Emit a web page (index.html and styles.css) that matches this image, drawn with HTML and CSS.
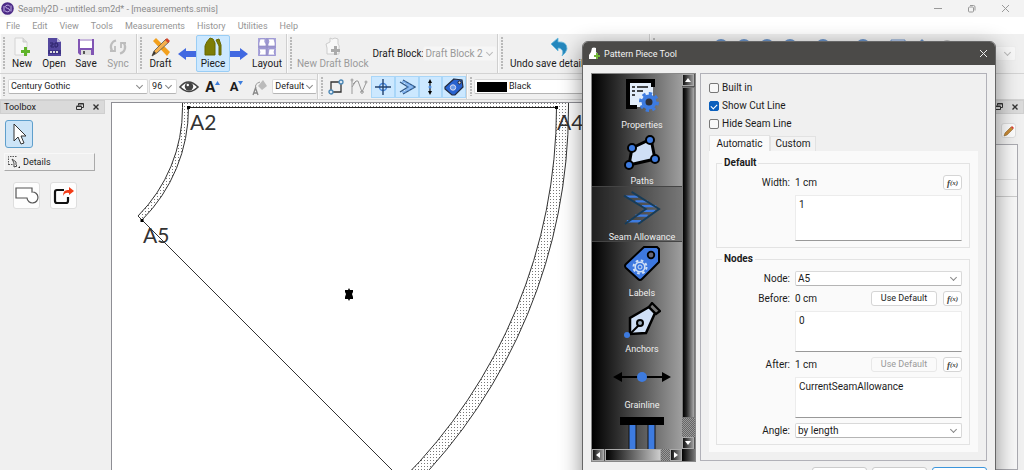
FILE: index.html
```html
<!DOCTYPE html>
<html lang="en">
<head>
<meta charset="utf-8">
<title>Seamly2D</title>
<link rel="stylesheet" href="styles.css">
</head>
<body>
<header class="titlebar">
  <svg class="app-logo" width="13" height="13" viewBox="0 0 13 13"><circle cx="6.500" cy="6.500" r="6.300" fill="#4b2a86"/><path d="M8.800 4.200C8 2.700 4.400 2.800 4.400 4.600c0 2 4.400 1.500 4.400 3.700 0 2-4 2-4.800.4M10 3.500v6M3 4v5.500" fill="none" stroke="#c3b1e6" stroke-width="1"/></svg>
  <h1 class="title-text">Seamly2D - untitled.sm2d* - [measurements.smis]</h1>
  <div class="win-buttons">
    <button class="plain" aria-label="Minimize"><svg width="9" height="9" viewBox="0 0 9 9"><path d="M1 4.500h8" stroke="#999"/></svg></button>
    <button class="plain" aria-label="Restore"><svg width="9" height="9" viewBox="0 0 9 9" fill="none" stroke="#999"><rect x="1.500" y="3" width="5" height="5" rx="1"/><path d="M3 1.500h3.500q1.500 0 1.500 1.500v3.500"/></svg></button>
    <button class="plain" aria-label="Close"><svg width="9" height="9" viewBox="0 0 9 9"><path d="M1 1l7 7M8 1l-7 7" stroke="#999"/></svg></button>
  </div>
</header>
<nav class="menubar">
  <button class="plain">File</button><button class="plain">Edit</button><button class="plain">View</button><button class="plain">Tools</button><button class="plain">Measurements</button><button class="plain">History</button><button class="plain">Utilities</button><button class="plain">Help</button>
</nav>

<div class="toolbar main-tools">
  <div class="tool-group files">
    <i class="handle"></i>
    <button class="tool"><svg width="20" height="20" viewBox="0 0 20 20"><path d="M3 1h8l4 4v13H3z" fill="#f7f7f7" stroke="#d4d4d4"/><path d="M11 1v4h4" fill="#ddd" stroke="#ccc"/><path d="M12 10h3v3h3v3h-3v3h-3v-3H9v-3h3z" fill="#5fb32a"/></svg><span>New</span></button>
    <button class="tool"><svg width="20" height="20" viewBox="0 0 20 20"><path d="M4 1h9l4 4v14H4z" fill="#54479e"/><path d="M13 1v4h4z" fill="#b9b3dc"/><path d="M6 6h3v2H7v2h3M11 6h2q2 2 0 4h-2z" fill="none" stroke="#2a2266"/><path d="M4 13h13v4H4z" fill="#3c3284"/><path d="M6 15h9" stroke="#ddd" stroke-width="2" stroke-dasharray="2 1"/></svg><span>Open</span></button>
    <button class="tool"><svg width="20" height="20" viewBox="0 0 20 20"><path d="M2 2h16v16H4l-2-2z" fill="#8155b4"/><path d="M4 2h12v9H4z" fill="#fff"/><path d="M4 2h12v2H4z" fill="#c9b8de"/><path d="M5 13h10v5H5z" fill="#ddd"/><path d="M7 14h2v3H7z" fill="#555"/></svg><span>Save</span></button>
    <button class="tool" disabled><svg width="20" height="20" viewBox="0 0 20 20" fill="none" stroke="#bdbdbd" stroke-width="2.200"><path d="M8 3.500a6.500 6.500 0 0 0-4 10M12 16.500a6.500 6.500 0 0 0 4-10"/><path d="M2 14h5V9M18 6h-5v5" stroke-width="1.800"/></svg><span>Sync</span></button>
  </div>
  <div class="tool-group modes">
    <i class="handle"></i>
    <button class="tool"><svg width="20" height="20" viewBox="0 0 20 20"><path d="M2 4l3-3 14 14-3 4z" fill="#f2a01d"/><path d="M15 2l3 3L6 16l-5 3 2-5z" fill="#f5b04d" stroke="#555" stroke-width=".8"/><path d="M14 3l2-2 3 3-2 2z" fill="#d4472b"/><path d="M3 14l2 2-4 3z" fill="#333"/></svg><span>Draft</span></button>
    <svg class="arrow" width="18" height="14" viewBox="0 0 18 14"><path d="M0 7l8-6v3h10v6H8v3z" fill="#4169e1"/></svg>
    <button class="tool active"><svg width="20" height="20" viewBox="0 0 20 20"><path d="M2 18V9q1-4 5-8l3 1 2 4v12zM13 3l3-1 2 6v10h-2V9z" fill="#7d7d05" stroke="#666600"/></svg><span>Piece</span></button>
    <svg class="arrow" width="18" height="14" viewBox="0 0 18 14"><path d="M18 7l-8-6v3H0v6h10v3z" fill="#4169e1"/></svg>
    <button class="tool"><svg width="20" height="20" viewBox="0 0 20 20"><path d="M1 1h18v18H1z" fill="#aaa5dc"/><path d="M3 2h5q-1 3 1 5v2H2V6zM11 2h6l1 4v3h-7V7q2-2 0-5zM2 12h7v6H2q2-3 0-6zM12 12h6q-2 3 0 6h-7z" fill="#fff" stroke="#8781c4" stroke-width=".6"/><path d="M1 10h18M10 1v18" stroke="#8f89c0"/></svg><span>Layout</span></button>
  </div>
  <div class="tool-group draft">
    <i class="handle"></i>
    <button class="tool" disabled><svg width="20" height="20" viewBox="0 0 20 20"><path d="M7 1q2 2 5 0l3 1v5q2 2 1 4v6H4v-6l-1-4 4-2z" fill="#f8f8f8" stroke="#ccc"/><path d="M11 9h3v3h3v3h-3v3h-3v-3H8v-3h3z" fill="#aaa"/></svg><span>New Draft Block</span></button>
    <label for="block">Draft Block:</label>
    <span class="pick block-pick"><select id="block" disabled><option>Draft Block 2</option></select></span>
  </div>
  <div class="tool-group history">
    <i class="handle"></i>
    <button class="tool undo"><svg width="20" height="20" viewBox="0 0 20 20"><path d="M2 7l7-6v4q9-1 9 7-1 4-5 7 2-5-1-7-1-1-3-1v3z" fill="#2487bd" stroke="#64b7dc" stroke-width=".8"/></svg><span>Undo save detail</span></button>
  </div>
  <div class="tool-group zooms">
    <i class="handle"></i>
    <svg class="zoom-icons" width="260" height="16" viewBox="0 0 260 16"><g fill="#d8e4f2" stroke="#6a93c8" stroke-width="2"><circle cx="21" cy="8" r="6"/><circle cx="44" cy="8" r="6"/><circle cx="67" cy="8" r="6"/><circle cx="90" cy="8" r="6"/><circle cx="123" cy="8" r="6"/><circle cx="163" cy="8" r="6"/></g><path d="M191 2h14v12h-14z" fill="#eef" stroke="#6a93c8"/><path d="M222 1l6 6h-12z" fill="#6a93c8"/><circle cx="247" cy="8" r="6" fill="#bbb"/></svg>
    <span class="pick zoom-pick"><select aria-label="Zoom" disabled><option></option></select></span>
  </div>
</div>

<div class="toolbar format-tools">
  <div class="tool-group fonts">
    <i class="handle"></i>
    <span class="pick font-pick"><select aria-label="Font"><option>Century Gothic</option></select></span>
    <span class="pick size-pick"><select aria-label="Font size"><option>96</option></select></span>
    <button class="mini" aria-label="Show point names"><svg width="20" height="16" viewBox="0 0 20 16"><path d="M1 8q8-10 18 0-9 9-18 0z" fill="#fff" stroke="#444" stroke-width="1.600"/><circle cx="10" cy="7.500" r="4.200" fill="#444"/><circle cx="8.800" cy="6" r="1.200" fill="#fff"/></svg></button>
    <button class="mini letter" aria-label="Larger"><b>A</b><svg width="5" height="4" viewBox="0 0 5 4"><path d="M0 4l2.500-4L5 4z" fill="#3c7ddd"/></svg></button>
    <button class="mini letter small" aria-label="Smaller"><b>A</b><svg width="5" height="4" viewBox="0 0 5 4"><path d="M0 0l2.500 4L5 0z" fill="#3c7ddd"/></svg></button>
    <button class="mini" aria-label="Text color" disabled><svg width="18" height="18" viewBox="0 0 18 18"><path d="M2 17l2.500-7L7 17M3 15h3" fill="none" stroke="#888" stroke-width="1.300"/><path d="M7 8l5-6 4 6-5 4z" fill="#bbb"/><path d="M5 10q-2-4 4-6" stroke="#999" fill="none"/></svg></button>
    <span class="pick style-pick"><select aria-label="Text style"><option>Default</option></select></span>
  </div>
  <div class="tool-group shows">
    <i class="handle"></i>
    <button class="mini" aria-label="Show nodes"><svg width="18" height="18" viewBox="0 0 18 18" fill="#dce9f4" stroke="#333" stroke-width="1.300"><path d="M4 4h10v10H4z" fill="none"/><circle cx="14" cy="4" r="2" stroke="#4b87b5"/><circle cx="4" cy="14" r="2" stroke="#4b87b5"/></svg></button>
    <button class="mini" aria-label="Show curves" disabled><svg width="18" height="18" viewBox="0 0 18 18" fill="none" stroke="#999"><path d="M2 16V3M2 9l4-6h2l4 11 4-9M6 3L3 6"/><circle cx="2" cy="2" r="1"/><circle cx="12" cy="14" r="1.300"/><circle cx="16" cy="4" r="1"/></svg></button>
    <button class="mini on" aria-label="Show origin"><svg width="18" height="18" viewBox="0 0 18 18" fill="none"><circle cx="9" cy="9" r="3.500" stroke="#4b8be0" stroke-width="1.600"/><path d="M9 1v16M1 9h16" stroke="#23426e" stroke-width="1.400"/></svg></button>
    <button class="mini on" aria-label="Show seam allowance"><svg width="18" height="18" viewBox="0 0 18 18" fill="none" stroke="#2f5684" stroke-width="1.300"><path d="M5 2l12 7-12 7M2 4l8 5-8 5"/><path d="M4 4h4M7 6h5M9 8h6M9 10h6M7 12h5M4 14h4" stroke="#4b8be0" stroke-width="1"/></svg></button>
    <button class="mini on" aria-label="Show grainline"><svg width="18" height="18" viewBox="0 0 18 18"><path d="M9 3v12" stroke="#111" stroke-width="1.200"/><path d="M9 1l2 4H7zM9 17l2-4H7z"/><circle cx="9" cy="9" r="1.500" fill="#4b8be0"/></svg></button>
    <button class="mini on" aria-label="Show labels"><svg width="20" height="18" viewBox="0 0 20 18"><path d="M10 1l8 1 1 7-8 8-3 0-7-6 0-2z" fill="#2862cf" stroke="#222a3c" stroke-width="1.200"/><circle cx="15.500" cy="4.500" r="1.500" fill="#dde" stroke="#222"/><circle cx="9" cy="9.500" r="2.700" fill="#6b9be8" stroke="#dde"/></svg></button>
  </div>
  <div class="tool-group pens">
    <i class="handle"></i>
    <span class="pick pen-pick"><i class="swatch"></i><select aria-label="Line color"><option>Black</option></select></span>
  </div>
</div>

<main class="workspace">
  <aside class="toolbox">
    <div class="dock-title"><h2>Toolbox</h2>
      <button class="plain" aria-label="Float"><svg width="8" height="8" viewBox="0 0 8 8" fill="none" stroke="#333"><path d="M2.500 2.500v-2h5v4h-2M.5 3.500h5v3h-5zM.5 3h5M2.500 1h5"/></svg></button>
      <button class="plain" aria-label="Close toolbox"><svg width="8" height="8" viewBox="0 0 8 8"><path d="M1.500 1.500l5 5M6.500 1.500l-5 5" stroke="#333" stroke-width="1.400"/></svg></button>
    </div>
    <button class="pointer" aria-label="Select"><svg width="16" height="24" viewBox="0 0 16 24"><path d="M3 2v17l4-4 3 7 3-1-3-7h5z" fill="#fff" stroke="#333"/></svg></button>
    <button class="details"><svg width="14" height="14" viewBox="0 0 14 14"><path d="M1.500 10V1.500h8" fill="none" stroke="#555" stroke-dasharray="1.500 1"/><path d="M1.500 9.500h4" fill="none" stroke="#555" stroke-dasharray="1.500 1"/><path d="M5 4l4 3v3l1 1-3 1V8z" fill="#fff" stroke="#444"/><path d="M11 13h2v-2z" fill="#222"/></svg>Details</button>
    <div class="piece-tools">
      <button aria-label="Union"><svg width="24" height="20" viewBox="0 0 24 20"><path d="M1 2h16v4a5.500 5.500 0 1 1-5 6H1z" fill="#fff" stroke="#555" stroke-width="1.200"/></svg></button>
      <button aria-label="Export piece"><svg width="22" height="20" viewBox="0 0 22 20"><path d="M11 4H4q-2 0-2 2v9q0 2 2 2h9q2 0 2-2v-4" fill="none" stroke="#111" stroke-width="2.200"/><path d="M10 10q0-7 6-6V1l5 4-5 4V7q-4-1-6 3z" fill="#f33b16"/></svg></button>
    </div>
  </aside>
  <section class="canvas">
    <svg class="drawing" width="470" height="367" viewBox="112 103 470 367">
      <defs><pattern id="dots" width="3" height="3" patternUnits="userSpaceOnUse"><path d="M1 1h1v1H1z" fill="#777"/></pattern></defs>
      <path d="M182.500 103H568.500V107.700A539 539 0 0 1 411 489L402 480A527 527 0 0 0 556.500 107.700H188.500A159 159 0 0 1 142 220L138 216A153 153 0 0 0 182.500 107.700z" fill="url(#dots)"/>
      <g fill="none" stroke="#333" stroke-width="1">
        <path d="M568.500 103v5A539 539 0 0 1 411 489"/>
        <path d="M556.500 107.500A527 527 0 0 1 402 480L142 220A159 159 0 0 0 188.500 107.500"/>
        <path d="M142 220l-4-4A153 153 0 0 0 182.500 107.500v-5"/>
      </g>
      <path d="M188 107.500H557" stroke="#222"/>
      <path d="M187 106h3v3h-3zM555 106h3v3h-3zM140.500 219h3v3h-3z"/>
      <path d="M345 290h3l1-2 1 2h3v2l-1 2 1 3v2h-3l-1 2-1-2h-3v-2l1-3-1-2z"/>
      <g class="node-names"><text x="190" y="130">A2</text><text x="143" y="243">A5</text><text x="557" y="130">A4</text></g>
    </svg>
  </section>
  <aside class="right-dock">
    <div class="dock-title">
      <button class="plain" aria-label="Float"><svg width="8" height="8" viewBox="0 0 8 8" fill="none" stroke="#333"><path d="M2.500 2.500v-2h5v4h-2M.5 3.500h5v3h-5zM.5 3h5M2.500 1h5"/></svg></button>
      <button class="plain" aria-label="Close panel"><svg width="8" height="8" viewBox="0 0 8 8"><path d="M1.500 1.500l5 5M6.500 1.500l-5 5" stroke="#333" stroke-width="1.400"/></svg></button>
    </div>
    <button class="edit" aria-label="Edit"><svg width="12" height="12" viewBox="0 0 12 12"><path d="M1 11l1-3 6-6 2 2-6 6z" fill="#c98b35" stroke="#80571c" stroke-width=".5"/><path d="M8 2l1-1 2 2-1 1z" fill="#e03c31"/></svg></button>
    <div class="pieces"><div class="head"></div><div class="row"></div></div>
  </aside>
</main>

<section class="dialog" role="dialog" aria-labelledby="dlg">
  <header class="dialog-title">
    <svg width="13" height="13" viewBox="0 0 13 13"><path d="M4 1q2-1 4 0v4l2 2v5H1V8l2-3z" fill="#fff"/><path d="M8 6h2v2h2v2h-2v2H8v-2H6V8h2z" fill="#71b539"/></svg>
    <h2 id="dlg">Pattern Piece Tool</h2>
    <button class="plain" aria-label="Close dialog"><svg width="9" height="9" viewBox="0 0 9 9"><path d="M1 1l7 7M8 1l-7 7" stroke="#eee"/></svg></button>
  </header>
  <div class="dialog-body">
    <div class="pages">
      <div class="page-list">
        <button class="page"><svg width="36" height="36" viewBox="0 0 36 36"><path d="M3 3h26v26H3z" fill="#e3eefb"/><path d="M13 29H4V3h25v6" fill="none" stroke="#000" stroke-width="4"/><path d="M8 9h3M13 9h11M8 13h3M13 13h6M8 17h3" stroke="#111" stroke-width="1.600"/><circle cx="25" cy="24" r="8.500" fill="none" stroke="#3d7be0" stroke-width="3" stroke-dasharray="3.300 3.300"/><circle cx="25" cy="24" r="5.500" fill="#2d2d33" stroke="#3d7be0" stroke-width="4"/></svg><span>Properties</span></button>
        <button class="page"><svg width="38" height="36" viewBox="0 0 38 36"><path d="M9 14l19-9 4 20-26 6z" fill="#cfdff5" stroke="#000" stroke-width="3"/><g fill="#3d7be0" stroke="#000" stroke-width="2"><circle cx="9" cy="14" r="4"/><circle cx="27" cy="6" r="4"/><circle cx="32" cy="25" r="4"/><circle cx="6" cy="31" r="4"/></g></svg><span>Paths</span></button>
        <button class="page current"><svg width="40" height="38" viewBox="0 0 40 38"><path d="M3 7h13M13 12h13M20 17h15M21 22h13M13 27h13M4 33h15" stroke="#3d7be0" stroke-width="2.500"/><path d="M9 2l29 18-22 16M1 6l23 14L2 36" fill="none" stroke="#173c58" stroke-width="2"/></svg><span>Seam Allowance</span></button>
        <button class="page"><svg width="38" height="36" viewBox="0 0 38 36"><path d="M21 1h13l2 2v13L19 33q-2 2-4 0L3 22q-2-2 0-4z" fill="#3d78df" stroke="#000" stroke-width="2"/><circle cx="28" cy="9" r="3.300" fill="#667" stroke="#000" stroke-width="1.800"/><circle cx="17" cy="21" r="6.500" fill="none" stroke="#cfdff5" stroke-width="2" stroke-dasharray="2.600 2.500"/><circle cx="17" cy="21" r="4.800" fill="#3d78df" stroke="#cfdff5" stroke-width="1.600"/><circle cx="17" cy="21" r="2" fill="none" stroke="#cfdff5"/></svg><span>Labels</span></button>
        <button class="page"><svg width="38" height="36" viewBox="0 0 38 36"><path d="M7 32V16l19-11 6 6-9 20z" fill="#cfdff5" stroke="#000" stroke-width="2.500"/><path d="M26 5l3-4 8 8-4 3z" fill="#777" stroke="#000" stroke-width="2.200"/><path d="M7 32l9-9" stroke="#000" stroke-width="2"/><circle cx="17" cy="21" r="3" fill="#9ab" stroke="#000" stroke-width="2"/><circle cx="4" cy="33" r="3" fill="#3d7be0"/></svg><span>Anchors</span></button>
        <button class="page"><svg width="58" height="36" viewBox="0 0 58 36"><path d="M5 19h48" stroke="#000" stroke-width="2.200"/><path d="M0 19l9-5v10zM58 19l-9-5v10z"/><circle cx="29" cy="19" r="5" fill="#3d7be0"/></svg><span>Grainline</span></button>
        <button class="page" aria-label="Passmarks"><svg width="44" height="36" viewBox="0 0 44 36"><path d="M9 9h7v27H9zM28 9h7v27h-7z" fill="#3d7be0" stroke="#111"/><path d="M0 3h44v8H0z"/></svg></button>
      </div>
      <div class="vscroll"><button aria-label="Scroll up"><svg width="6" height="4" viewBox="0 0 6 4"><path d="M0 4l3-4 3 4z"/></svg></button><i class="thumb"></i><i class="track"></i><button aria-label="Scroll down"><svg width="6" height="4" viewBox="0 0 6 4"><path d="M0 0l3 4 3-4z"/></svg></button></div>
      <div class="hscroll"><button aria-label="Scroll left"><svg width="4" height="6" viewBox="0 0 4 6"><path d="M4 0L0 3l4 3z"/></svg></button><i class="thumb"></i><i class="track"></i><button aria-label="Scroll right"><svg width="4" height="6" viewBox="0 0 4 6"><path d="M0 0l4 3-4 3z"/></svg></button></div>
      <div class="corner"></div>
    </div>
    <form class="settings">
      <label class="check"><input type="checkbox">Built in</label>
      <label class="check"><input type="checkbox" checked>Show Cut Line</label>
      <label class="check"><input type="checkbox">Hide Seam Line</label>
      <div class="tabs"><button type="button" class="tab selected">Automatic</button><button type="button" class="tab">Custom</button></div>
      <div class="tab-page">
        <fieldset><legend>Default</legend>
          <label for="w">Width:</label><div class="value"><output>1 cm</output><button type="button" class="fx" aria-label="Edit width formula">f<small>(x)</small></button></div>
          <textarea id="w" class="tall">1</textarea>
        </fieldset>
        <fieldset><legend>Nodes</legend>
          <label for="n">Node:</label><span class="pick"><select id="n"><option>A5</option></select></span>
          <label for="b">Before:</label><div class="value"><output>0 cm</output><button type="button" class="use">Use Default</button><button type="button" class="fx" aria-label="Edit before formula">f<small>(x)</small></button></div>
          <textarea id="b">0</textarea>
          <label for="a">After:</label><div class="value"><output>1 cm</output><button type="button" class="use" disabled>Use Default</button><button type="button" class="fx" aria-label="Edit after formula">f<small>(x)</small></button></div>
          <textarea id="a">CurrentSeamAllowance</textarea>
          <label for="g">Angle:</label><span class="pick"><select id="g"><option>by length</option></select></span>
        </fieldset>
      </div>
    </form>
  </div>
  <footer class="dialog-actions"><button aria-label="Apply"></button><button aria-label="Cancel"></button><button class="primary" aria-label="OK"></button></footer>
</section>
</body>
</html>
```
FILE: styles.css
```css
* { box-sizing: border-box; }
html, body { height: 100%; }
body { margin: 0; display: flex; flex-direction: column; overflow: hidden; position: relative; background: #f0f0f0; color: #1b1b1b; font: 9px/14px Roboto, "Noto Sans", sans-serif; }
button, select, textarea, input { font: inherit; color: inherit; margin: 0; }
button { display: flex; align-items: center; justify-content: center; padding: 0; border: 0; background: none; white-space: nowrap; }
h1, h2 { margin: 0; font-size: inherit; font-weight: 400; }
svg { display: block; flex: none; }
i { display: block; }

.titlebar { flex: none; display: flex; align-items: center; gap: 4px; height: 17px; padding: 0 14px 0 1px; background: #f3f3f3; }
.title-text { flex: 1; color: #8a8a8a; }
.win-buttons { display: flex; gap: 25px; }
.menubar { flex: none; display: flex; gap: 12px; height: 17px; padding: 0 6px 0 6px; background: #fff; color: #959595; }

.toolbar { flex: none; display: flex; border-bottom: 1px solid #d3d3d3; }
.tool-group { flex: none; display: flex; align-items: center; border-right: 1px solid #cfcfcf; border-left: 1px solid #fafafa; }
.handle { flex: none; align-self: stretch; width: 3px; margin: 3px 0 3px 2px; background: radial-gradient(circle at 1px 1px, #b9b9b9 1px, transparent 1px) 0 0 / 3px 3px; }
.main-tools { height: 40px; }
.main-tools .tool { flex-direction: column; height: 37px; font-size: 10px; border: 1px solid transparent; border-radius: 2px; }
.main-tools .tool span { line-height: 14px; }
.main-tools .tool:disabled { color: #9b9b9b; }
.main-tools .tool.active { width: 34px; background: #cce8ff; border-color: #99cdf5; }
.files { width: 137px; }
.files .tool { width: 32px; }
.modes { width: 150px; }
.modes .tool { width: 35px; }
.modes .tool:last-child { width: 38px; }
.draft { width: 211px; font-size: 10px; }
.draft .tool { width: 80px; }
.draft label { width: 51px; white-space: nowrap; }
.history { width: 152px; }
.history .undo { width: 100px; margin-left: 5px; }
.history .undo span { align-self: flex-start; }
.zooms { flex: 1; border-right: 0; align-items: flex-start; padding-top: 4px; }
.zooms .handle { margin-top: 0; }
.zoom-icons { margin-left: 44px; }

.pick { position: relative; display: flex; align-items: center; height: 15px; border: 1px solid #d9d9d9; border-bottom-color: #b5b5b5; border-radius: 2px; background: #fff; }
.pick select { appearance: none; width: 100%; height: 13px; padding: 0 10px 0 2px; border: 0; background: none; line-height: 13px; opacity: 1; }
.pick::after { content: ""; position: absolute; right: 5px; top: 3px; width: 4px; height: 4px; border: solid #888; border-width: 0 1px 1px 0; transform: rotate(45deg); pointer-events: none; }
.block-pick { width: 74px; border-color: #f3f3f3; background: #f6f6f6; color: #999; }
.block-pick::after, .zoom-pick::after { border-color: #bbb; }
.block-pick select { padding-left: 1px; }
.block-pick::after, .style-pick::after { right: 4px; }
.zoom-pick { width: 40px; margin: 8px 8px 0 auto; border-color: #eee; background: #f8f8f8; }

.format-tools { height: 26px; }
.mini { width: 24px; height: 22px; }
.mini.on { background: #cce8ff; border: 1px solid #a9d6f8; }
.fonts { width: 318px; }
.font-pick { width: 141px; margin: 0 1px 0 2px; }
.size-pick { width: 28px; }
.letter { align-items: flex-start; font-size: 15px; line-height: 22px; }
.letter b { font-weight: 700; }
.letter svg { margin-top: 5px; }
.letter.small { font-size: 13px; }
.style-pick { width: 45px; }
.shows { width: 149px; }
.pens .pick { margin-left: 1px; }
.pen-pick { width: 150px; padding-left: 2px; }
.swatch { flex: none; width: 30px; height: 10px; background: #000; }

.workspace { flex: 1; min-height: 0; display: flex; gap: 6px; }
.toolbox { flex: none; width: 105px; display: flex; flex-direction: column; align-items: flex-start; }
.dock-title { align-self: stretch; display: flex; align-items: center; gap: 8px; height: 14px; padding: 0 4px 0 3px; background: #dadada; border: 1px solid #cfcfcf; }
.dock-title h2 { flex: 1; }
.pointer { width: 28px; height: 28px; margin: 6px 0 0 5px; background: #cce4f7; border: 1px solid #5f9fcc; border-radius: 3px; }
.details { justify-content: flex-start; gap: 2px; width: 91px; height: 18px; margin: 5px 0 0 4px; padding-left: 2px; border: 1px solid #f8f8f8; border-right-color: #aaa; border-bottom-color: #aaa; }
.piece-tools { display: flex; gap: 10px; margin: 11px 0 0 13px; }
.piece-tools button, .edit { width: 27px; height: 27px; background: #fdfdfd; border: 1px solid #dedede; border-radius: 3px; }
.canvas { flex: 1; min-width: 0; margin-top: 2px; overflow: hidden; background: #fff; border: solid #8e8e94; border-width: 1px 0 0 1px; }
.node-names { font: 400 21px Lato, sans-serif; fill: #333; }
.right-dock { flex: none; width: 34px; display: flex; flex-direction: column; align-items: flex-end; }
.right-dock .dock-title { justify-content: flex-end; }
.edit { width: 15px; height: 15px; margin: 9px 8px 6px 0; }
.pieces { align-self: stretch; flex: 1; margin-right: 6px; background: #f8f8f8; border: 1px solid #aaaab0; }
.pieces .head { height: 35px; border-bottom: 1px solid #ddd; }
.pieces .row { height: 17px; border-bottom: 1px solid #ccc; }

.dialog { position: absolute; left: 582px; top: 41px; width: 414px; background: #f0f0f0; border: 1px solid #666; border-radius: 6px 6px 0 0; box-shadow: 0 6px 22px rgba(0, 0, 0, .45); }
.dialog-title { display: flex; align-items: center; gap: 3px; height: 23px; padding: 0 7px 0 5px; background: #4b4a48; color: #f2f2f2; border-radius: 5px 5px 0 0; }
.dialog-title h2 { flex: 1; }
.dialog-body { display: flex; align-items: flex-start; gap: 4px; padding: 8px 8px 5px 8px; }
.pages { flex: none; display: grid; grid-template: 375px 12px / 90px 13px; width: 105px; border: 1px solid #888; }
.page-list { overflow: hidden; padding-left: 10px; background: linear-gradient(90deg, #000, #9f9f9f); color: #eee; }
.page { flex-direction: column; justify-content: flex-start; width: 100%; height: 56px; padding-top: 4px; }
.page svg { margin-bottom: 4px; height: 36px; }
.page span { line-height: 14px; }
.page.current { width: 90px; margin-left: -10px; padding-left: 10px; background: rgba(70, 70, 70, .45); border: solid #444; border-width: 1px 0; padding-top: 3px; }
.vscroll { display: flex; flex-direction: column; background: #555; }
.vscroll button, .hscroll button { flex: none; width: 12px; height: 12px; background: linear-gradient(90deg, #111, #999); border: 1px solid #aaa; }
.vscroll svg, .hscroll svg { fill: #fff; }
.vscroll .thumb { flex: 1; margin-top: 1px; background: linear-gradient(90deg, #000, #222 30%, #aaa); border: 1px solid #777; }
.track { background: repeating-conic-gradient(#666 0 25%, #999 0 50%) 0 0 / 2px 2px; }
.vscroll .track { height: 19px; }
.hscroll { display: flex; background: #555; }
.hscroll .thumb { flex: 1; margin-left: 1px; background: linear-gradient(90deg, #000, #ccc); border: 1px solid #aaa; }
.hscroll .track { width: 9px; }
.corner { background: linear-gradient(90deg, #000, #777); }

.settings { flex: 1; min-width: 0; padding: 5px 8px 8px 8px; border: 1px solid #b1b1b8; font-size: 10px; }
.check { display: flex; align-items: center; gap: 3px; height: 18px; }
.check input { appearance: none; display: grid; place-items: center; width: 10px; height: 10px; border: 1px solid #777; border-radius: 2px; background: #f8f8f8; }
.check input:checked { background: #0a5fbd; border-color: #0a5fbd; }
.check input:checked::after { content: ""; width: 5px; height: 3px; border: solid #fff; border-width: 0 0 1px 1px; transform: rotate(-45deg); }
.tabs { display: flex; align-items: flex-end; margin-top: 2px; }
.tab { width: 46px; height: 15px; border: 1px solid #e2e2e2; border-bottom: 0; background: #f3f3f3; }
.tab.selected { width: 61px; height: 16px; background: #fafafa; }
.tab-page { padding: 5px 8px 7px 7px; background: #fafafa; }
fieldset { display: grid; grid-template-columns: 66px 1fr; gap: 5px; align-items: center; min-width: 0; margin: 0 0 4px; padding: 5px 7px 6px 7px; border: 1px solid #e3e3e3; }
fieldset:last-child { margin-bottom: 0; }
legend { padding: 0 2px; margin-left: -2px; height: 14px; font-weight: 700; }
fieldset label { text-align: right; height: 15px; line-height: 15px; }
.value { display: flex; gap: 6px; height: 15px; line-height: 15px; }
.value output { flex: 1; }
textarea { grid-column: 2; display: block; width: 100%; height: 41px; padding: 2px 3px; border: 1px solid #ececec; border-bottom-color: #999; background: #fff; resize: none; }
textarea.tall { height: 46px; }
.use, .fx { width: 19px; background: #fff; border: 1px solid #d5d5d5; border-radius: 3px; font-size: 9px; }
.use { width: 66px; }
.use:disabled { background: #fafafa; border-color: #e8e8e8; color: #999; }
.fx { font: italic 700 9px/12px "Liberation Serif", serif; color: #444; }
.fx small { font-size: 7px; }
.dialog-actions { display: flex; justify-content: flex-end; gap: 5px; padding: 0 8px; }
.dialog-actions button { width: 55px; height: 18px; background: #fff; border: 1px solid #ccc; border-radius: 3px; }
.dialog-actions .primary { border-color: #3c96dc; }
```
